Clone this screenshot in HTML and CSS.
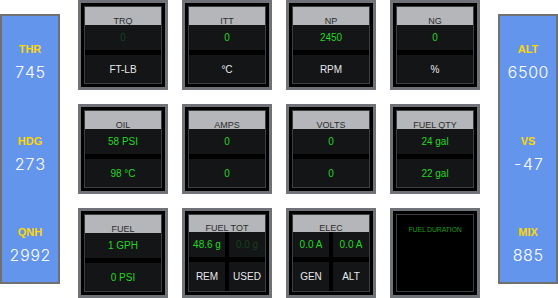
FILE: index.html
```html
<!DOCTYPE html>
<html>
<head>
<meta charset="utf-8">
<link rel="stylesheet" href="styles.css">
</head>
<body>
<div class="screen">
  <aside class="side">
    <div class="readout"><div class="lbl">THR</div><div class="seg">745</div></div>
    <div class="readout"><div class="lbl">HDG</div><div class="seg">273</div></div>
    <div class="readout"><div class="lbl">QNH</div><div class="seg">2992</div></div>
  </aside>

  <main class="grid">
    <div class="gauge"><div class="inner">
      <div class="hdr">TRQ</div>
      <div class="val dim">0</div>
      <div class="unit">FT-LB</div>
    </div></div>
    <div class="gauge"><div class="inner">
      <div class="hdr">ITT</div>
      <div class="val">0</div>
      <div class="unit">°C</div>
    </div></div>
    <div class="gauge"><div class="inner">
      <div class="hdr">NP</div>
      <div class="val">2450</div>
      <div class="unit">RPM</div>
    </div></div>
    <div class="gauge"><div class="inner">
      <div class="hdr">NG</div>
      <div class="val">0</div>
      <div class="unit">%</div>
    </div></div>

    <div class="gauge"><div class="inner">
      <div class="hdr">OIL</div>
      <div class="val">58 PSI</div>
      <div class="unit green">98 °C</div>
    </div></div>
    <div class="gauge"><div class="inner">
      <div class="hdr">AMPS</div>
      <div class="val">0</div>
      <div class="unit green">0</div>
    </div></div>
    <div class="gauge"><div class="inner">
      <div class="hdr">VOLTS</div>
      <div class="val">0</div>
      <div class="unit green">0</div>
    </div></div>
    <div class="gauge"><div class="inner">
      <div class="hdr">FUEL QTY</div>
      <div class="val">24 gal</div>
      <div class="unit green">22 gal</div>
    </div></div>

    <div class="gauge"><div class="inner">
      <div class="hdr">FUEL</div>
      <div class="val">1 GPH</div>
      <div class="unit green">0 PSI</div>
    </div></div>
    <div class="gauge"><div class="inner">
      <div class="hdr short">FUEL TOT</div>
      <div class="quad">
        <div class="val">48.6 g</div>
        <div class="val dim">0.0 g</div>
        <div class="unit">REM</div>
        <div class="unit">USED</div>
      </div>
    </div></div>
    <div class="gauge"><div class="inner">
      <div class="hdr short">ELEC</div>
      <div class="quad">
        <div class="val">0.0 A</div>
        <div class="val">0.0 A</div>
        <div class="unit">GEN</div>
        <div class="unit">ALT</div>
      </div>
    </div></div>
    <div class="gauge"><div class="inner blank">
      <div class="note">FUEL DURATION</div>
    </div></div>
  </main>

  <aside class="side">
    <div class="readout"><div class="lbl">ALT</div><div class="seg">6500</div></div>
    <div class="readout"><div class="lbl">VS</div><div class="seg">-47</div></div>
    <div class="readout"><div class="lbl">MIX</div><div class="seg">885</div></div>
  </aside>
</div>
</body>
</html>
```

FILE: styles.css
```css
html, body {
  margin: 0;
  padding: 0;
  background: #ffffff;
  font-family: "Liberation Sans", Arial, sans-serif;
}

.screen {
  display: flex;
  align-items: flex-start;
  gap: 18px;
  width: 558px;
  height: 298px;
}

/* side panels */
.side {
  width: 60px;
  height: 270px;
  margin-top: 14px;
  box-sizing: border-box;
  border: 2px solid #707070;
  background: #6495ed;
  display: flex;
  flex-direction: column;
  justify-content: space-between;
  align-items: center;
  padding: 27px 0 19px;
}

.readout {
  display: flex;
  flex-direction: column;
  align-items: center;
}

.lbl {
  color: #ffd700;
  font-weight: bold;
  font-size: 11px;
  line-height: 13px;
}

.seg {
  color: #ffffff;
  font-family: Inter, "DejaVu Sans Mono", monospace;
  font-weight: 300;
  font-variant-numeric: tabular-nums;
  font-size: 16px;
  line-height: 16px;
  letter-spacing: 0;
  margin-top: 8px;
}

/* gauge grid */
.grid {
  display: grid;
  grid-template-columns: repeat(4, 90px);
  grid-template-rows: repeat(3, 90px);
  gap: 14px;
}

.gauge {
  box-sizing: border-box;
  border: 3px solid #6f7276;
  background: #000000;
  padding: 3px;
}

.inner {
  height: 100%;
  box-sizing: border-box;
  border: 1px solid #3d4043;
  display: flex;
  flex-direction: column;
}

.hdr {
  height: 18px;
  flex: none;
  box-sizing: border-box;
  padding-top: 10px;
  background: #b4b6b9;
  color: #2b2d2f;
  font-size: 9px;
  line-height: 9px;
  text-align: center;
  overflow: hidden;
}

.hdr.short {
  height: 17px;
  padding-top: 9px;
}

.val, .unit {
  background: #131517;
  display: flex;
  align-items: center;
  justify-content: center;
  font-size: 10px;
  white-space: nowrap;
}

.val {
  height: 25px;
  flex: none;
  color: #22d822;
}

.val.dim {
  color: #16401a;
}

.unit {
  flex: 1;
  margin-top: 5px;
  color: #e8e8e8;
}

.unit.green {
  color: #22d822;
}

.quad {
  flex: 1;
  display: grid;
  grid-template-columns: 1fr 1fr;
  grid-template-rows: 25px 1fr;
  column-gap: 4px;
  row-gap: 5px;
}

.quad .unit {
  margin-top: 0;
}

.inner.blank {
  background: #000000;
  align-items: center;
}

.note {
  margin-top: 11px;
  color: #1a9a1a;
  font-size: 7px;
  line-height: 8px;
  letter-spacing: -0.2px;
}
```
